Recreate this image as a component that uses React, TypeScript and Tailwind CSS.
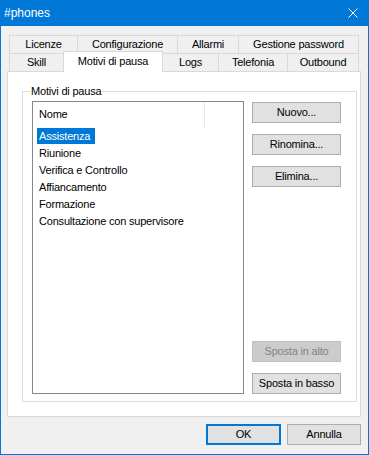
const topTabs = [
  { label: 'Licenze', w: 'w-[68px]' },
  { label: 'Configurazione', w: 'w-[100px]' },
  { label: 'Allarmi', w: 'w-[61px]' },
  { label: 'Gestione password', w: 'w-[121px] border-r' },
]

const items = [
  'Assistenza',
  'Riunione',
  'Verifica e Controllo',
  'Affiancamento',
  'Formazione',
  'Consultazione con supervisore',
]

function Btn({ children, disabled }: { children: React.ReactNode; disabled?: boolean }) {
  return (
    <div
      className={
        disabled
          ? 'flex h-[21px] w-[89px] items-center justify-center border border-[#bfbfbf] bg-[#cccccc] text-[#838383]'
          : 'flex h-[21px] w-[89px] items-center justify-center border border-[#adadad] bg-[#e1e1e1]'
      }
    >
      {children}
    </div>
  )
}

export default function App() {
  return (
    <div className="flex h-[455px] w-[369px] flex-col bg-[#0078d7] px-px pb-px font-['Liberation_Sans',Arial,sans-serif] text-[11px] tracking-[-0.2px] text-black">
      {/* title bar */}
      <div className="flex h-[26px] shrink-0 items-center justify-between pl-[3px] pr-[10px] text-[12px] tracking-normal text-white">
        <span>#phones</span>
        <svg width="10" height="10" viewBox="0 0 10 10" className="mb-px">
          <path d="M0.5 0.5 L9.5 9.5 M9.5 0.5 L0.5 9.5" stroke="white" strokeWidth="1" />
        </svg>
      </div>

      <div className="flex flex-1 flex-col bg-[#f0f0f0] pl-[6px] pr-[7px] pt-[9px]">
        {/* tabs */}
        <div className="ml-[2px] flex h-[18px] w-[350px]">
          {topTabs.map((t) => (
            <div
              key={t.label}
              className={`${t.w} flex items-center justify-center border-l border-t border-[#d9d9d9] bg-[#f0f0f0]`}
            >
              {t.label}
            </div>
          ))}
        </div>
        <div className="ml-[2px] flex h-[18px] w-[350px] items-end">
          <div className="flex h-[18px] w-[54px] items-center justify-center border-l border-t border-[#d9d9d9]">
            Skill
          </div>
          <div className="relative z-10 -mb-px flex h-[21px] w-[100px] items-center justify-center border-l border-r border-t border-[#d9d9d9] bg-white pb-px">
            Motivi di pausa
          </div>
          <div className="flex h-[18px] w-[55px] items-center justify-center border-t border-[#d9d9d9]">
            Logs
          </div>
          <div className="flex h-[18px] w-[69px] items-center justify-center border-l border-t border-[#d9d9d9]">
            Telefonia
          </div>
          <div className="flex h-[18px] w-[72px] items-center justify-center border-l border-r border-t border-[#d9d9d9]">
            Outbound
          </div>
        </div>

        {/* tab page */}
        <div className="h-[346px] w-[354px] border border-[#d9d9d9] bg-white">
          <fieldset className="ml-[14px] mt-[12px] w-[335px] border border-[#dcdcdc] pb-[7px]">
            <legend className="ml-[7px] px-px leading-[15px]">Motivi di pausa</legend>
            <div className="flex pl-[9px] pt-[2px]">
              <div className="h-[293px] w-[212px] border border-[#828790] bg-white">
                <div className="flex h-[25px]">
                  <div className="flex w-[172px] items-center border-r border-[#e5e5e5] pl-[6px]">Nome</div>
                </div>
                <div className="mt-px pl-[4px]">
                  {items.map((it, i) => (
                    <div key={it} className="flex h-[17px] items-start">
                      <span
                        className={
                          i === 0
                            ? 'h-[16px] bg-[#0078d7] pl-[2px] pr-[5px] leading-[16px] text-white'
                            : 'h-[16px] pl-[2px] pr-[5px] leading-[16px]'
                        }
                      >
                        {it}
                      </span>
                    </div>
                  ))}
                </div>
              </div>
              <div className="ml-[8px] flex h-[293px] flex-col gap-[11px] pt-px">
                <Btn>Nuovo...</Btn>
                <Btn>Rinomina...</Btn>
                <Btn>Elimina...</Btn>
                <div className="flex-1" />
                <Btn disabled>Sposta in alto</Btn>
                <Btn>Sposta in basso</Btn>
              </div>
            </div>
          </fieldset>
        </div>

        {/* dialog buttons */}
        <div className="mt-[7px] flex justify-end gap-[6px]">
          <div className="flex h-[21px] w-[75px] items-center justify-center border-2 border-[#0078d7] bg-[#e1e1e1]">
            OK
          </div>
          <div className="flex h-[21px] w-[74px] items-center justify-center border border-[#adadad] bg-[#e1e1e1]">
            Annulla
          </div>
        </div>
      </div>
    </div>
  )
}
